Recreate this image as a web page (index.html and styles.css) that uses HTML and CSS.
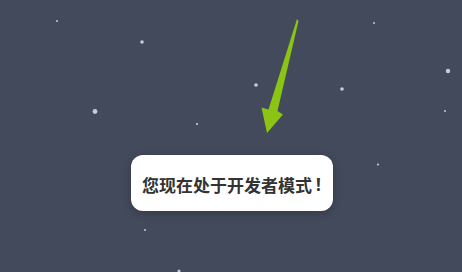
FILE: index.html
```html
<!DOCTYPE html>
<html lang="zh">
<head>
<meta charset="utf-8">
<link rel="stylesheet" href="styles.css">
</head>
<body>
<div class="scene">
  <svg class="sky" width="462" height="272" viewBox="0 0 462 272">
    <g fill="#c9ccd6">
      <circle cx="57" cy="21" r="1"/>
      <circle cx="142" cy="42" r="1.8"/>
      <circle cx="95" cy="111.5" r="2.4"/>
      <circle cx="197" cy="124" r="1.1"/>
      <circle cx="256" cy="85" r="1.8"/>
      <circle cx="342" cy="89" r="1.8"/>
      <circle cx="374" cy="23" r="1"/>
      <circle cx="448" cy="71" r="2.2"/>
      <circle cx="445" cy="111" r="1"/>
      <circle cx="378" cy="164.5" r="1.1"/>
      <circle cx="145" cy="230" r="1"/>
      <circle cx="179" cy="271" r="1.5"/>
    </g>
    <path class="arrow" d="M297 19 L298.5 21 L277.5 111 L283 114.5 L267 133 L261.5 107.5 L268.5 109.5 Z"/>
  </svg>
  <div class="toast"><span class="msg">您现在处于开发者模式</span><span class="bang">!</span></div>
</div>
</body>
</html>
```
FILE: styles.css
```css
html, body {
  margin: 0;
  padding: 0;
  background: #434a5b;
}
.scene {
  position: relative;
  width: 462px;
  height: 272px;
  overflow: hidden;
  background: #434a5b;
  display: flex;
  flex-direction: column;
  align-items: flex-start;
}
.sky {
  position: absolute;
  left: 0;
  top: 0;
}
.arrow {
  fill: #8cc414;
}
.toast {
  position: relative;
  margin: 155px 0 0 131px;
  width: 202px;
  height: 56px;
  box-sizing: border-box;
  background: #ffffff;
  border-radius: 12px;
  box-shadow: 0 2px 8px rgba(0, 0, 0, 0.25);
  display: flex;
  align-items: center;
  padding-left: 11px;
  padding-top: 2px;
  font-family: "Noto Sans CJK SC", "Noto Sans", sans-serif;
  font-size: 17px;
  font-weight: 700;
  color: #333333;
  white-space: nowrap;
}
.bang {
  margin-left: 4px;
  font-family: "Noto Sans", sans-serif;
  font-weight: 700;
}
```
